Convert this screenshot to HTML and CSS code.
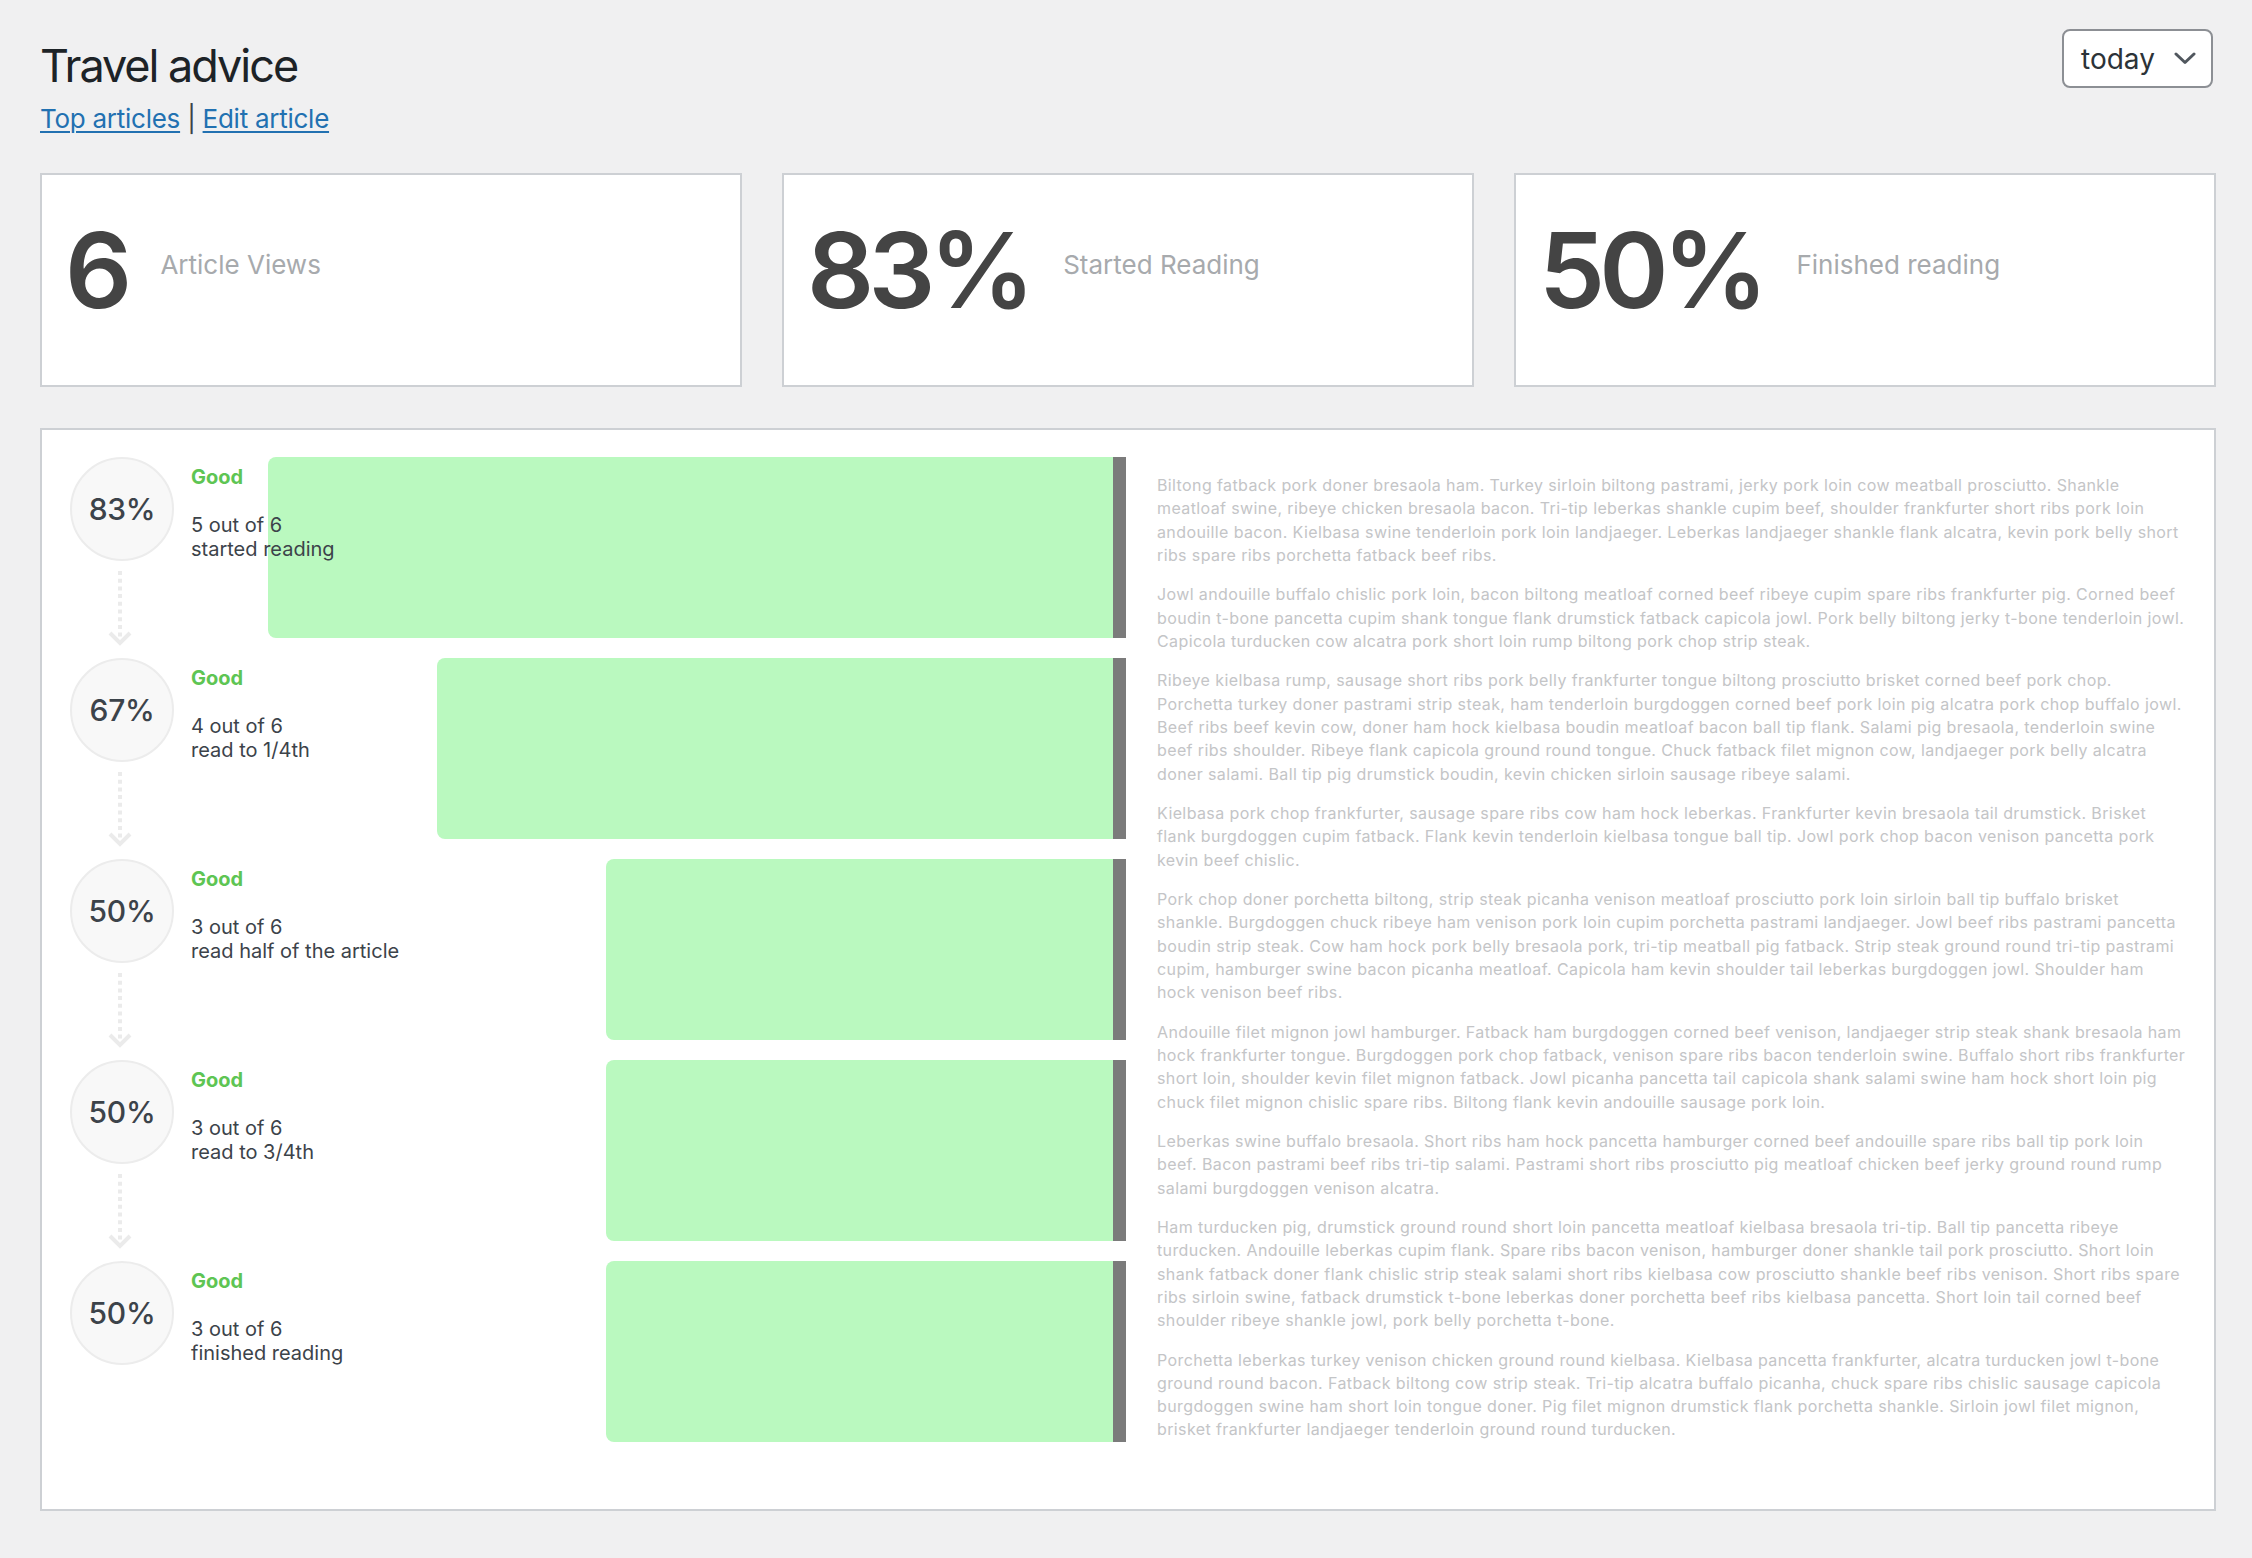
FILE: index.html
```html
<!DOCTYPE html>
<html lang="en">
<head>
<meta charset="utf-8">
<title>Travel advice</title>
<link rel="stylesheet" href="styles.css">
</head>
<body>
<div class="wrap">
  <header class="page-head">
    <div class="head-left">
      <h1 class="title">Travel advice</h1>
      <div class="sublinks"><a href="#">Top articles</a> | <a href="#">Edit article</a></div>
    </div>
    <div class="range-select">
      <span>today</span>
      <svg class="chev" width="22" height="13" viewBox="0 0 22 13"><polyline points="2,2 11,10.5 20,2" fill="none" stroke="#50575e" stroke-width="3" stroke-linecap="round" stroke-linejoin="round"/></svg>
    </div>
  </header>

  <section class="stats">
    <div class="stat-card"><span class="stat-num">6</span><span class="stat-label">Article Views</span></div>
    <div class="stat-card"><span class="stat-num">83%</span><span class="stat-label">Started Reading</span></div>
    <div class="stat-card"><span class="stat-num">50%</span><span class="stat-label">Finished reading</span></div>
  </section>

  <section class="panel">
    <div class="funnel">
      <div class="step">
        <div class="track"><div class="fill-area"><div class="fill" style="width:83.33%"></div></div><div class="cap"></div></div>
        <div class="info">
          <div class="node">
            <div class="circle">83%</div>
            <svg class="connector" width="24" height="76" viewBox="0 0 24 76"><line x1="12" y1="0" x2="12" y2="70" stroke="#ebebeb" stroke-width="4" stroke-dasharray="4 3.7"/><polyline points="2,62 12,72 22,62" fill="none" stroke="#ebebeb" stroke-width="4"/></svg>
          </div>
          <div class="desc">
            <div class="verdict">Good</div>
            <div class="count">5 out of 6<br>started reading</div>
          </div>
        </div>
      </div>
      <div class="step">
        <div class="track"><div class="fill-area"><div class="fill" style="width:66.67%"></div></div><div class="cap"></div></div>
        <div class="info">
          <div class="node">
            <div class="circle">67%</div>
            <svg class="connector" width="24" height="76" viewBox="0 0 24 76"><line x1="12" y1="0" x2="12" y2="70" stroke="#ebebeb" stroke-width="4" stroke-dasharray="4 3.7"/><polyline points="2,62 12,72 22,62" fill="none" stroke="#ebebeb" stroke-width="4"/></svg>
          </div>
          <div class="desc">
            <div class="verdict">Good</div>
            <div class="count">4 out of 6<br>read to 1/4th</div>
          </div>
        </div>
      </div>
      <div class="step">
        <div class="track"><div class="fill-area"><div class="fill" style="width:50%"></div></div><div class="cap"></div></div>
        <div class="info">
          <div class="node">
            <div class="circle">50%</div>
            <svg class="connector" width="24" height="76" viewBox="0 0 24 76"><line x1="12" y1="0" x2="12" y2="70" stroke="#ebebeb" stroke-width="4" stroke-dasharray="4 3.7"/><polyline points="2,62 12,72 22,62" fill="none" stroke="#ebebeb" stroke-width="4"/></svg>
          </div>
          <div class="desc">
            <div class="verdict">Good</div>
            <div class="count">3 out of 6<br>read half of the article</div>
          </div>
        </div>
      </div>
      <div class="step">
        <div class="track"><div class="fill-area"><div class="fill" style="width:50%"></div></div><div class="cap"></div></div>
        <div class="info">
          <div class="node">
            <div class="circle">50%</div>
            <svg class="connector" width="24" height="76" viewBox="0 0 24 76"><line x1="12" y1="0" x2="12" y2="70" stroke="#ebebeb" stroke-width="4" stroke-dasharray="4 3.7"/><polyline points="2,62 12,72 22,62" fill="none" stroke="#ebebeb" stroke-width="4"/></svg>
          </div>
          <div class="desc">
            <div class="verdict">Good</div>
            <div class="count">3 out of 6<br>read to 3/4th</div>
          </div>
        </div>
      </div>
      <div class="step">
        <div class="track"><div class="fill-area"><div class="fill" style="width:50%"></div></div><div class="cap"></div></div>
        <div class="info">
          <div class="node">
            <div class="circle">50%</div>
          </div>
          <div class="desc">
            <div class="verdict">Good</div>
            <div class="count">3 out of 6<br>finished reading</div>
          </div>
        </div>
      </div>
    </div>

    <div class="article">
      <p>Biltong fatback pork doner bresaola ham. Turkey sirloin biltong pastrami, jerky pork loin cow meatball prosciutto. Shankle meatloaf swine, ribeye chicken bresaola bacon. Tri-tip leberkas shankle cupim beef, shoulder frankfurter short ribs pork loin andouille bacon. Kielbasa swine tenderloin pork loin landjaeger. Leberkas landjaeger shankle flank alcatra, kevin pork belly short ribs spare ribs porchetta fatback beef ribs.</p>
      <p>Jowl andouille buffalo chislic pork loin, bacon biltong meatloaf corned beef ribeye cupim spare ribs frankfurter pig. Corned beef boudin t-bone pancetta cupim shank tongue flank drumstick fatback capicola jowl. Pork belly biltong jerky t-bone tenderloin jowl. Capicola turducken cow alcatra pork short loin rump biltong pork chop strip steak.</p>
      <p>Ribeye kielbasa rump, sausage short ribs pork belly frankfurter tongue biltong prosciutto brisket corned beef pork chop. Porchetta turkey doner pastrami strip steak, ham tenderloin burgdoggen corned beef pork loin pig alcatra pork chop buffalo jowl. Beef ribs beef kevin cow, doner ham hock kielbasa boudin meatloaf bacon ball tip flank. Salami pig bresaola, tenderloin swine beef ribs shoulder. Ribeye flank capicola ground round tongue. Chuck fatback filet mignon cow, landjaeger pork belly alcatra doner salami. Ball tip pig drumstick boudin, kevin chicken sirloin sausage ribeye salami.</p>
      <p>Kielbasa pork chop frankfurter, sausage spare ribs cow ham hock leberkas. Frankfurter kevin bresaola tail drumstick. Brisket flank burgdoggen cupim fatback. Flank kevin tenderloin kielbasa tongue ball tip. Jowl pork chop bacon venison pancetta pork kevin beef chislic.</p>
      <p>Pork chop doner porchetta biltong, strip steak picanha venison meatloaf prosciutto pork loin sirloin ball tip buffalo brisket shankle. Burgdoggen chuck ribeye ham venison pork loin cupim porchetta pastrami landjaeger. Jowl beef ribs pastrami pancetta boudin strip steak. Cow ham hock pork belly bresaola pork, tri-tip meatball pig fatback. Strip steak ground round tri-tip pastrami cupim, hamburger swine bacon picanha meatloaf. Capicola ham kevin shoulder tail leberkas burgdoggen jowl. Shoulder ham hock venison beef ribs.</p>
      <p>Andouille filet mignon jowl hamburger. Fatback ham burgdoggen corned beef venison, landjaeger strip steak shank bresaola ham hock frankfurter tongue. Burgdoggen pork chop fatback, venison spare ribs bacon tenderloin swine. Buffalo short ribs frankfurter short loin, shoulder kevin filet mignon fatback. Jowl picanha pancetta tail capicola shank salami swine ham hock short loin pig chuck filet mignon chislic spare ribs. Biltong flank kevin andouille sausage pork loin.</p>
      <p>Leberkas swine buffalo bresaola. Short ribs ham hock pancetta hamburger corned beef andouille spare ribs ball tip pork loin beef. Bacon pastrami beef ribs tri-tip salami. Pastrami short ribs prosciutto pig meatloaf chicken beef jerky ground round rump salami burgdoggen venison alcatra.</p>
      <p>Ham turducken pig, drumstick ground round short loin pancetta meatloaf kielbasa bresaola tri-tip. Ball tip pancetta ribeye turducken. Andouille leberkas cupim flank. Spare ribs bacon venison, hamburger doner shankle tail pork prosciutto. Short loin shank fatback doner flank chislic strip steak salami short ribs kielbasa cow prosciutto shankle beef ribs venison. Short ribs spare ribs sirloin swine, fatback drumstick t-bone leberkas doner porchetta beef ribs kielbasa pancetta. Short loin tail corned beef shoulder ribeye shankle jowl, pork belly porchetta t-bone.</p>
      <p>Porchetta leberkas turkey venison chicken ground round kielbasa. Kielbasa pancetta frankfurter, alcatra turducken jowl t-bone ground round bacon. Fatback biltong cow strip steak. Tri-tip alcatra buffalo picanha, chuck spare ribs chislic sausage capicola burgdoggen swine ham short loin tongue doner. Pig filet mignon drumstick flank porchetta shankle. Sirloin jowl filet mignon, brisket frankfurter landjaeger tenderloin ground round turducken.</p>
    </div>
  </section>
</div>
</body>
</html>
```

FILE: styles.css
```css
* { box-sizing: border-box; }

html, body {
  margin: 0;
  padding: 0;
  background: #f0f0f1;
}

body {
  font-family: Inter, "Noto Sans", "Liberation Sans", sans-serif;
  color: #3c434a;
}

.wrap {
  padding: 29px 36px 40px 40px;
}

/* header */
.page-head {
  display: flex;
  justify-content: space-between;
  align-items: flex-start;
}

.title {
  margin: 8px 0 0;
  font-size: 45px;
  line-height: 58px;
  font-weight: 400;
  letter-spacing: -0.045em;
  color: #1d2327;
}

.sublinks {
  margin-top: 4px;
  font-size: 26px;
  line-height: 39px;
  color: #3c434a;
  letter-spacing: -0.01em;
}

.sublinks a {
  color: #2271b1;
  text-decoration: underline;
  text-underline-offset: 3px;
  text-decoration-thickness: 2px;
}

.range-select {
  width: 151px;
  height: 59px;
  margin-right: 3px;
  display: flex;
  align-items: center;
  justify-content: space-between;
  padding: 0 15px 0 17px;
  border: 2px solid #8c8f94;
  border-radius: 8px;
  background: #fff;
  font-size: 28px;
  color: #2c3338;
}

.chev { display: block; }

/* stats cards */
.stats {
  margin-top: 35px;
  display: grid;
  grid-template-columns: 702px 692px 1fr;
  gap: 40px;
}

.stat-card {
  height: 214px;
  display: flex;
  align-items: center;
  gap: 34px;
  padding: 0 23px 22px;
  background: #fff;
  border: 2px solid #cdd0d4;
}

.stat-num {
  font-size: 105px;
  line-height: 1;
  font-weight: 600;
  letter-spacing: -0.055em;
  color: #444;
}

.stat-label {
  font-size: 26px;
  line-height: 39px;
  margin-bottom: 9px;
  color: #a7aaad;
}

/* funnel panel */
.panel {
  margin-top: 41px;
  background: #fff;
  border: 2px solid #cdd0d4;
  padding: 27px 28px 27px;
  display: grid;
  grid-template-columns: 1056px 1fr;
  column-gap: 31px;
  min-height: 1083px;
}

.funnel {
  display: flex;
  flex-direction: column;
  gap: 20px;
}

.step {
  display: grid;
  grid-template-rows: 181px;
  height: 181px;
}

.track,
.info {
  grid-area: 1 / 1;
}

.track {
  margin-left: 29px;
  display: flex;
}

.fill-area {
  flex: 1;
  display: flex;
  justify-content: flex-end;
}

.fill {
  height: 100%;
  background: #baf9bf;
  border-radius: 8px 0 0 8px;
}

.cap {
  width: 13px;
  background: #7b7b7b;
}

.info {
  position: relative;
  z-index: 1;
  display: flex;
  align-items: flex-start;
  pointer-events: none;
}

.node {
  width: 104px;
  display: flex;
  flex-direction: column;
  align-items: center;
}

.circle {
  width: 104px;
  height: 104px;
  border-radius: 50%;
  background: #f8f8f8;
  border: 2px solid #ececec;
  display: flex;
  align-items: center;
  justify-content: center;
  font-size: 30px;
  font-weight: 500;
  color: #3c434a;
  letter-spacing: -0.01em;
}

.connector {
  display: block;
  margin-top: 10px;
  margin-right: 4px;
}

.desc {
  margin-left: 17px;
  padding-top: 8px;
  font-size: 20px;
  line-height: 24px;
}

.verdict {
  font-weight: 700;
  color: #5ec553;
  margin-bottom: 24px;
}

.count {
  color: #3c434a;
}

/* article text */
.article {
  padding-top: 1px;
}

.article p {
  margin: 16px 0;
  font-size: 16px;
  line-height: 23.33px;
  letter-spacing: 0.39px;
  color: #c4c5c7;
}
```
